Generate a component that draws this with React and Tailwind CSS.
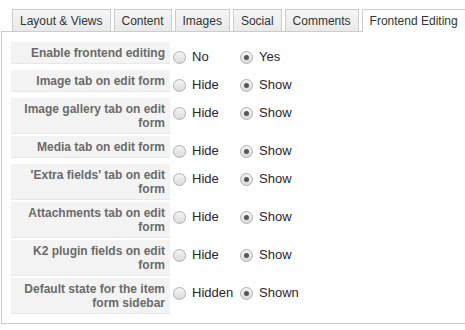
import React from "react";

const tabs = [
  "Layout & Views",
  "Content",
  "Images",
  "Social",
  "Comments",
  "Frontend Editing",
];

const rows = [
  { label: "Enable frontend editing", options: ["No", "Yes"] },
  { label: "Image tab on edit form", options: ["Hide", "Show"] },
  { label: "Image gallery tab on edit form", options: ["Hide", "Show"] },
  { label: "Media tab on edit form", options: ["Hide", "Show"] },
  { label: "'Extra fields' tab on edit form", options: ["Hide", "Show"] },
  { label: "Attachments tab on edit form", options: ["Hide", "Show"] },
  { label: "K2 plugin fields on edit form", options: ["Hide", "Show"] },
  { label: "Default state for the item form sidebar", options: ["Hidden", "Shown"] },
];

const Radio = ({ checked }) => (
  <span className="w-[13px] h-[13px] rounded-full border border-[#b0b0b0] bg-gradient-to-b from-[#f4f4f4] to-[#dcdcdc] flex items-center justify-center shrink-0">
    {checked && <span className="w-[5px] h-[5px] rounded-full bg-[#555]" />}
  </span>
);

const App = () => {
  return (
    <div className="w-[465px] h-[330px] bg-white overflow-hidden pt-[9px] font-['Liberation_Sans',Arial,sans-serif]">
      {/* Tabs */}
      <div className="flex gap-[3px] ml-[12px] relative z-10 whitespace-nowrap">
        {tabs.map((t, i) => {
          const active = i === tabs.length - 1;
          return (
            <div
              key={t}
              className={`shrink-0 border border-b-0 border-[#cccccc] px-[7px] text-[12px] leading-[22px] text-[#333] ${
                active ? "bg-white h-[23px] -mb-px" : "bg-gradient-to-b from-[#f5f5f5] to-[#e9e9e9] h-[22px]"
              }`}
            >
              {t}
            </div>
          );
        })}
      </div>

      {/* Panel */}
      <div className="ml-[1px] border border-r-0 border-[#cccccc] pt-[10px] pl-[9px] pb-[7px]">
        {rows.map((r, i) => (
          <div key={i} className="flex items-start">
            <div className="w-[159px] shrink-0 mb-[2px] bg-[#f3f3f3] border-b border-[#e8e8e8] pt-[4px] pb-[3px] pr-[5px] pl-[4px] text-right text-[12px] leading-[14px] font-bold text-[#6a6a6a]">
              {r.label}
            </div>
            <div className="flex pt-[8px] pb-[6px] ml-[3px]">
              {r.options.map((o, j) => (
                <label key={o} className="flex items-center w-[67px] text-[13px] leading-[14px] text-[#2a2430]">
                  <Radio checked={j === 1} />
                  <span className="ml-[6px]">{o}</span>
                </label>
              ))}
            </div>
          </div>
        ))}
      </div>
    </div>
  );
};

export default App;
